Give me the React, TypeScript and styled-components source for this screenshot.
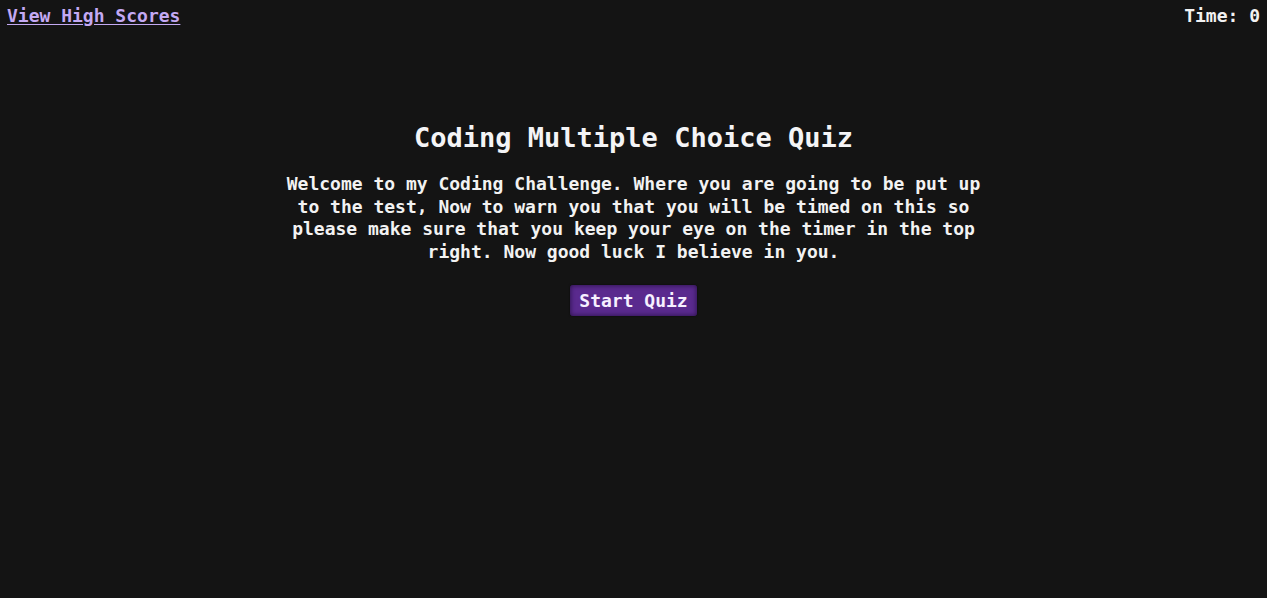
import React from "react";
import styled, { createGlobalStyle } from "styled-components";

const GlobalStyle = createGlobalStyle`
  html, body {
    margin: 0;
    padding: 0;
    background: #141414;
  }
  body {
    padding: 5px 7px 8px 7px;
    min-height: 598px;
    box-sizing: border-box;
    color: #f2f2f2;
    font-family: "DejaVu Sans Mono", "Liberation Mono", monospace;
    font-size: 18px;
    font-weight: 700;
    line-height: 1.25;
  }
`;

const Header = styled.header`
  display: flex;
  justify-content: space-between;
  align-items: center;
  height: 22px;
`;

const ScoresLink = styled.a`
  color: #c3a9f3;
  text-decoration: underline;
  text-underline-offset: 2px;
  cursor: pointer;
`;

const Timer = styled.div`
  color: #f2f2f2;
`;

const Main = styled.main`
  display: flex;
  flex-direction: column;
  align-items: center;
  text-align: center;
  padding-top: 94px;
`;

const Title = styled.h1`
  margin: 0 0 18px;
  font-size: 27px;
  line-height: 34px;
  font-weight: 700;
  color: #f4f4f6;
`;

const Intro = styled.p`
  margin: 0 0 22px;
  max-width: 700px;
  line-height: 22.5px;
`;

const StartButton = styled.button`
  font: inherit;
  font-size: 18px;
  line-height: 23px;
  color: #f6f0ff;
  background: #5a2a8e;
  border: none;
  border-radius: 3px;
  padding: 4px 9px;
  box-shadow: inset 0 0 4px 1px rgba(20, 5, 40, 0.55), 0 0 2px rgba(0, 0, 0, 0.6);
  cursor: pointer;
`;

export default function App() {
  return (
    <>
      <GlobalStyle />
      <Header>
        <ScoresLink>View High Scores</ScoresLink>
        <Timer>Time: 0</Timer>
      </Header>
      <Main>
        <Title>Coding Multiple Choice Quiz</Title>
        <Intro>
          Welcome to my Coding Challenge. Where you are going to be put up to the test, Now to
          warn you that you will be timed on this so please make sure that you keep your eye on
          the timer in the top right. Now good luck I believe in you.
        </Intro>
        <StartButton>Start Quiz</StartButton>
      </Main>
    </>
  );
}
